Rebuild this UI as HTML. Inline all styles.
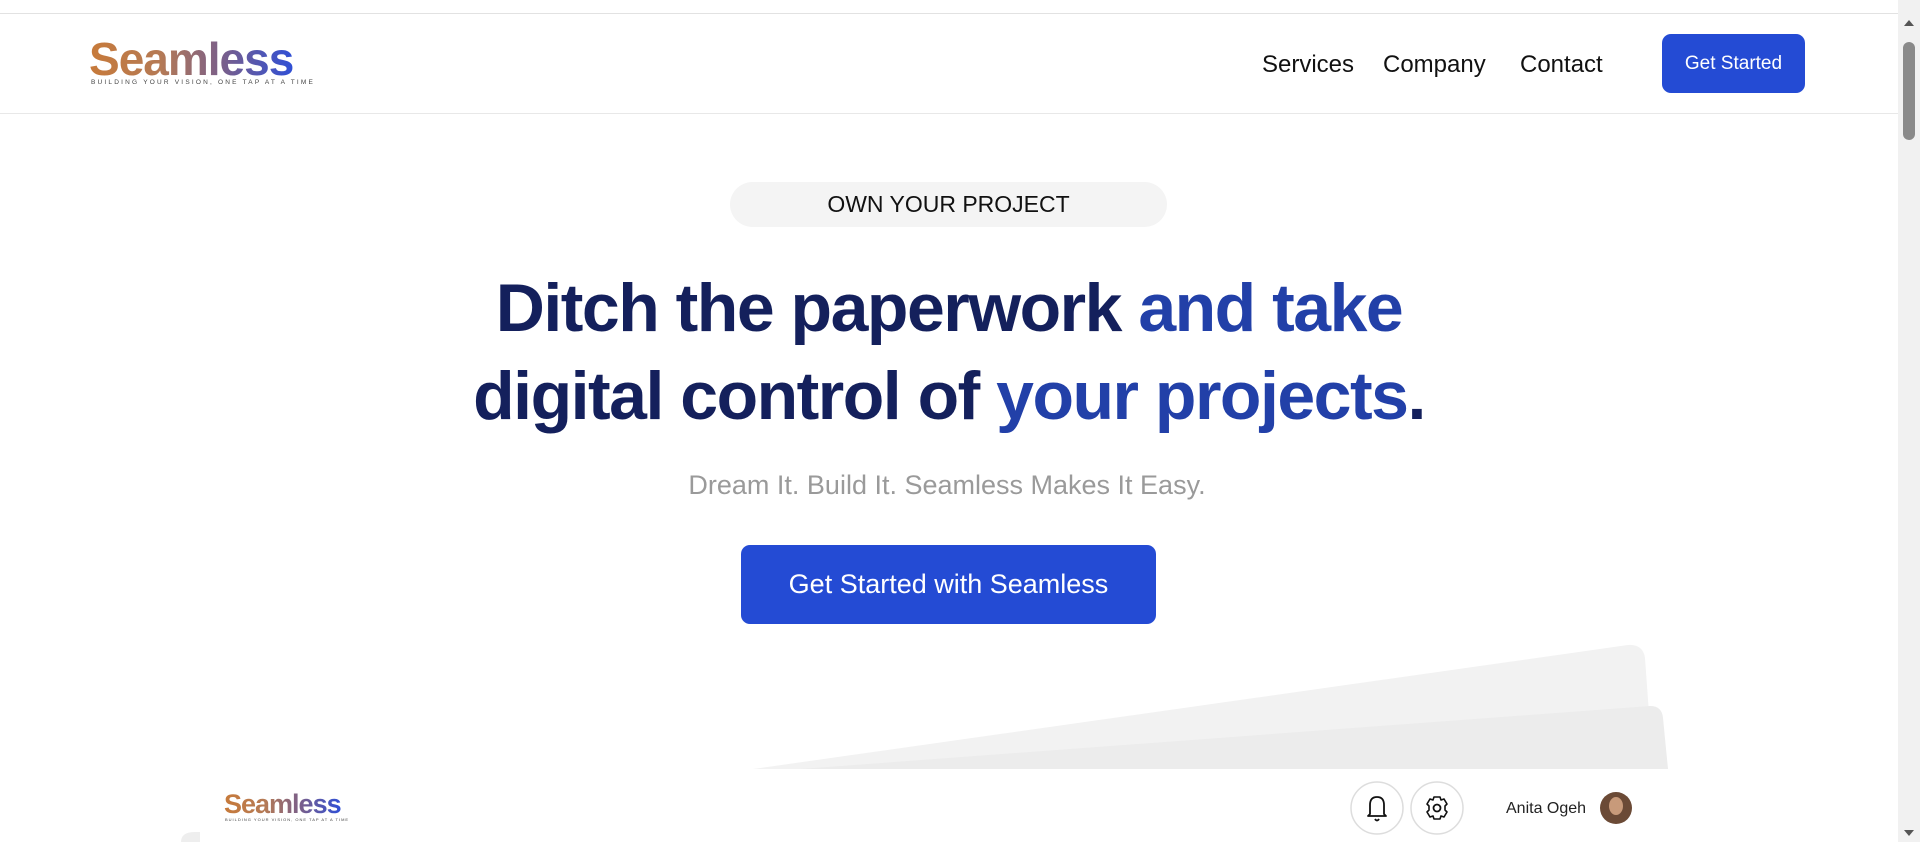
<!DOCTYPE html>
<html><head><meta charset="utf-8"><style>
*{margin:0;padding:0;box-sizing:border-box}
body{width:1920px;height:842px;overflow:hidden;background:#fff;font-family:"Liberation Sans",sans-serif;position:relative}
.abs{position:absolute}
.logo{font-weight:bold;letter-spacing:-1px;background:linear-gradient(90deg,#c77a3a 0%,#b57a55 35%,#7a5f8a 65%,#2f4fd6 100%);-webkit-background-clip:text;background-clip:text;color:transparent;line-height:1}
.tag{color:#444;letter-spacing:2px;white-space:nowrap}
h1{position:absolute;left:0;width:1898px;top:264px;text-align:center;font-size:68px;line-height:88px;font-weight:bold;color:#14205c;letter-spacing:-1.5px}
h1 span{color:#2240a8}
</style></head><body>
<div class="abs" style="left:0;top:13px;width:1898px;height:1px;background:#e2e2e2"></div>
<div class="abs" style="left:0;top:113px;width:1898px;height:1px;background:#e8e8e8"></div>
<div class="abs logo" style="left:89px;top:36px;font-size:46px"><span>S</span>eamless</div>
<div class="abs tag" style="left:91px;top:79px;font-size:6.5px;letter-spacing:2.2px">BUILDING YOUR VISION, ONE TAP AT A TIME</div>
<div class="abs" style="left:1262px;top:51px;font-size:24px;color:#111">Services</div>
<div class="abs" style="left:1383px;top:51px;font-size:24px;color:#111">Company</div>
<div class="abs" style="left:1520px;top:51px;font-size:24px;color:#111">Contact</div>
<div class="abs" style="left:1662px;top:34px;width:143px;height:59px;background:#244bd4;border-radius:9px;color:#fff;font-size:19px;display:flex;align-items:center;justify-content:center">Get Started</div>
<div class="abs" style="left:1898px;top:0;width:22px;height:842px;background:#f1f1f1"></div>
<div class="abs" style="left:1903px;top:42px;width:12px;height:98px;background:#8a8a8a;border-radius:6px"></div>
<div class="abs" style="left:1904px;top:20px;width:0;height:0;border-left:5px solid transparent;border-right:5px solid transparent;border-bottom:6px solid #555"></div>
<div class="abs" style="left:1904px;top:830px;width:0;height:0;border-left:5px solid transparent;border-right:5px solid transparent;border-top:6px solid #555"></div>
<div class="abs" style="left:730px;top:182px;width:437px;height:45px;background:#f4f4f4;border-radius:23px;display:flex;align-items:center;justify-content:center;font-size:23px;color:#111">OWN YOUR PROJECT</div>
<h1>Ditch the paperwork <span>and take</span><br>digital control of <span>your projects</span>.</h1>
<div class="abs" style="left:0;width:1894px;top:470px;text-align:center;font-size:27px;color:#9a9a9a">Dream It. Build It. Seamless Makes It Easy.</div>
<div class="abs" style="left:741px;top:545px;width:415px;height:79px;background:#244bd4;border-radius:9px;color:#fff;font-size:27px;display:flex;align-items:center;justify-content:center">Get Started with Seamless</div>
<svg class="abs" style="left:0;top:0" width="1898" height="842">
<path d="M753 769 L1628 645 Q1643 644 1645 658 L1653 769 Z" fill="#f2f2f2"/>
<path d="M800 769 L1650 706 Q1662 706 1663 718 L1668 769 Z" fill="#ececec"/>
<path d="M181 842 Q181 832 195 832 L200 832 L200 842Z" fill="#eee"/>
<circle cx="1377" cy="808" r="26" fill="#fff" stroke="#ddd" stroke-width="1.5"/>
<circle cx="1437" cy="808" r="26" fill="#fff" stroke="#ddd" stroke-width="1.5"/>
<path d="M1370 814 L1370 805 Q1370 797 1377 797 Q1384 797 1384 805 L1384 814 L1386 816 L1368 816 Z M1375 819 Q1377 822 1379 819" fill="none" stroke="#111" stroke-width="1.8" stroke-linejoin="round"/>
<circle cx="1437" cy="808" r="3.5" fill="none" stroke="#111" stroke-width="1.8"/>
<path d="M1434 797 h6 l1 3 l3 -1 l3 5 l-2 2 v4 l2 2 l-3 5 l-3 -1 l-1 3 h-6 l-1 -3 l-3 1 l-3 -5 l2 -2 v-4 l-2 -2 l3 -5 l3 1 z" fill="none" stroke="#111" stroke-width="1.6" stroke-linejoin="round"/>
<circle cx="1616" cy="808" r="16" fill="#6b4a36"/>
<ellipse cx="1616" cy="806" rx="7" ry="9" fill="#c89a7a"/>
</svg>
<div class="abs logo" style="left:224px;top:791px;font-size:27px">Seamless</div>
<div class="abs tag" style="left:225px;top:817px;font-size:4px;letter-spacing:1px">BUILDING YOUR VISION, ONE TAP AT A TIME</div>
<div class="abs" style="left:1506px;top:800px;font-size:16px;color:#222">Anita Ogeh</div>
</body></html>
